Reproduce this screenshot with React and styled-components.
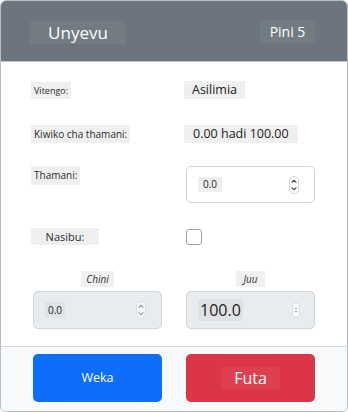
import React from "react";
import styled, { createGlobalStyle } from "styled-components";

const Global = createGlobalStyle`
  html, body { margin: 0; padding: 0; background: #ffffff; }
  body { font-family: "Open Sans", "Noto Sans", sans-serif; }
  * { box-sizing: border-box; }
`;

const Card = styled.div`
  width: 348px;
  height: 412px;
  border: 1px solid #b9bec3;
  border-radius: 6px;
  overflow: hidden;
  display: flex;
  flex-direction: column;
  background: #fff;
`;

const Header = styled.div`
  height: 61px;
  flex: none;
  background: #6c757d;
  border-bottom: 1px solid #c5c9cd;
  display: flex;
  align-items: center;
  justify-content: space-between;
  padding: 0 32px 0 29px;
  color: #fff;
`;

const Title = styled.div`
  background: rgba(255, 255, 255, 0.05);
  width: 96px;
  height: 23px;
  display: flex;
  align-items: center;
  justify-content: center;
  font-size: 17px;
  margin-top: 2px;
`;

const Pin = styled.div`
  background: rgba(255, 255, 255, 0.05);
  width: 55px;
  height: 23px;
  display: flex;
  align-items: center;
  justify-content: center;
  font-size: 14px;
`;

const Body = styled.div`
  flex: 1;
  padding: 18px 32px 0 32px;
  display: flex;
  flex-direction: column;
`;

const Row = styled.div`
  display: grid;
  grid-template-columns: 129px 129px;
  column-gap: 24px;
  align-items: ${(p) => p.$align || "center"};
  margin-top: ${(p) => p.$mt || 0}px;
  margin-bottom: ${(p) => p.$mb || 0}px;
`;

const Label = styled.span`
  justify-self: start;
  margin-left: -2px;
  background: #efefef;
  color: #2b2b2b;
  font-size: ${(p) => p.$size || 10}px;
  line-height: ${(p) => p.$h || 17}px;
  padding: 0 ${(p) => p.$pad || 3}px;
  width: ${(p) => (p.$w ? p.$w + "px" : "auto")};
  text-align: ${(p) => (p.$w ? "center" : "left")};
`;

const Value = styled.span`
  justify-self: start;
  margin-left: -2px;
  background: #efefef;
  color: #222;
  font-size: 12.5px;
  line-height: 18px;
  padding: 0 ${(p) => p.$pad || 7}px;
`;

const InputBox = styled.div`
  height: ${(p) => p.$h || 37}px;
  border: 1px solid #ced4da;
  border-radius: 5px;
  background: ${(p) => (p.$disabled ? "#e9ecef" : "#fff")};
  display: flex;
  align-items: center;
  justify-content: space-between;
  padding: 0 ${(p) => p.$pr || 15}px 0 11px;
`;

const InputText = styled.span`
  background: ${(p) => (p.$disabled ? "#e0e2e5" : "#efefef")};
  color: #222;
  font-size: ${(p) => p.$size || 10}px;
  line-height: ${(p) => p.$h || 15}px;
  padding: 0 ${(p) => p.$pad || 4}px;
`;

const Check = styled.div`
  width: 16px;
  height: 16px;
  border: 1px solid #9a9fa4;
  border-radius: 3px;
  background: #fff;
`;

const SubLabel = styled.span`
  align-self: center;
  background: #f0f0f0;
  color: #333;
  font-style: italic;
  font-size: 10px;
  line-height: 16px;
  padding: 0 ${(p) => p.$pad || 3}px;
  margin-bottom: 4px;
`;

const Column = styled.div`
  display: flex;
  flex-direction: column;
  align-items: stretch;
`;

const Footer = styled.div`
  height: 65px;
  flex: none;
  background: #f8f9fa;
  border-top: 1px solid #d5d9dd;
  display: grid;
  grid-template-columns: 129px 129px;
  column-gap: 24px;
  padding: 7px 32px 0 32px;
`;

const Button = styled.button`
  height: 48px;
  border: none;
  border-radius: 5px;
  background: ${(p) => p.$bg};
  color: #fff;
  font-family: inherit;
  font-size: ${(p) => p.$size}px;
  display: flex;
  align-items: center;
  justify-content: center;
  padding: 0;
`;

const BtnText = styled.span`
  background: rgba(255, 255, 255, ${(p) => p.$a || 0});
  line-height: 22px;
  padding: 0 ${(p) => p.$pad || 0}px;
`;

const Spinner = ({ faded, small }) => (
  <svg
    width={small ? 8 : 10}
    height={small ? 16 : 18}
    viewBox="0 0 10 18"
    style={{ opacity: faded ? 0.45 : 1 }}
  >
    <rect x="0.5" y="0.5" width="9" height="17" rx="4.5" fill="#fff" stroke="#d2d4d7" />
    {small ? (
      <>
        <path d="M3.8 7.5 L5 6.3 L6.2 7.5" fill="none" stroke="#555" strokeWidth="0.9" />
        <path d="M3.8 10.5 L5 11.7 L6.2 10.5" fill="none" stroke="#555" strokeWidth="0.9" />
      </>
    ) : (
      <>
        <path d="M2.6 6.6 L5 4.3 L7.4 6.6" fill="none" stroke="#444" strokeWidth="1.1" />
        <path d="M2.6 11.4 L5 13.7 L7.4 11.4" fill="none" stroke="#444" strokeWidth="1.1" />
      </>
    )}
  </svg>
);

export default function App() {
  return (
    <>
      <Global />
      <Card>
        <Header>
          <Title>Unyevu</Title>
          <Pin>Pini 5</Pin>
        </Header>
        <Body>
          <Row $mt={1} $mb={26}>
            <Label $size={9}>Vitengo:</Label>
            <Value $pad={8}>Asilimia</Value>
          </Row>
          <Row $mb={23}>
            <Label $size={10} $h={18}>Kiwiko cha thamani:</Label>
            <Value $pad={9}>0.00 hadi 100.00</Value>
          </Row>
          <Row $align="start" $mb={25}>
            <Label $size={10} $h={19}>Thamani:</Label>
            <InputBox>
              <InputText $pad={5}>0.0</InputText>
              <Spinner />
            </InputBox>
          </Row>
          <Row $mb={26}>
            <Label $size={11} $w={68}>Nasibu:</Label>
            <Check />
          </Row>
          <Row>
            <Column>
              <SubLabel $pad={5}>Chini</SubLabel>
              <InputBox $disabled $h={38}>
                <InputText $disabled $pad={3} $h={16}>0.0</InputText>
                <Spinner faded />
              </InputBox>
            </Column>
            <Column>
              <SubLabel $pad={7}>Juu</SubLabel>
              <InputBox $disabled $h={38} $pr={14}>
                <InputText $disabled $size={16} $h={22} $pad={2}>100.0</InputText>
                <Spinner small />
              </InputBox>
            </Column>
          </Row>
        </Body>
        <Footer>
          <Button $bg="#0d6efd" $size={12.5}>
            <BtnText>Weka</BtnText>
          </Button>
          <Button $bg="#dc3545" $size={16}>
            <BtnText $a={0.06} $pad={13}>Futa</BtnText>
          </Button>
        </Footer>
      </Card>
    </>
  );
}
